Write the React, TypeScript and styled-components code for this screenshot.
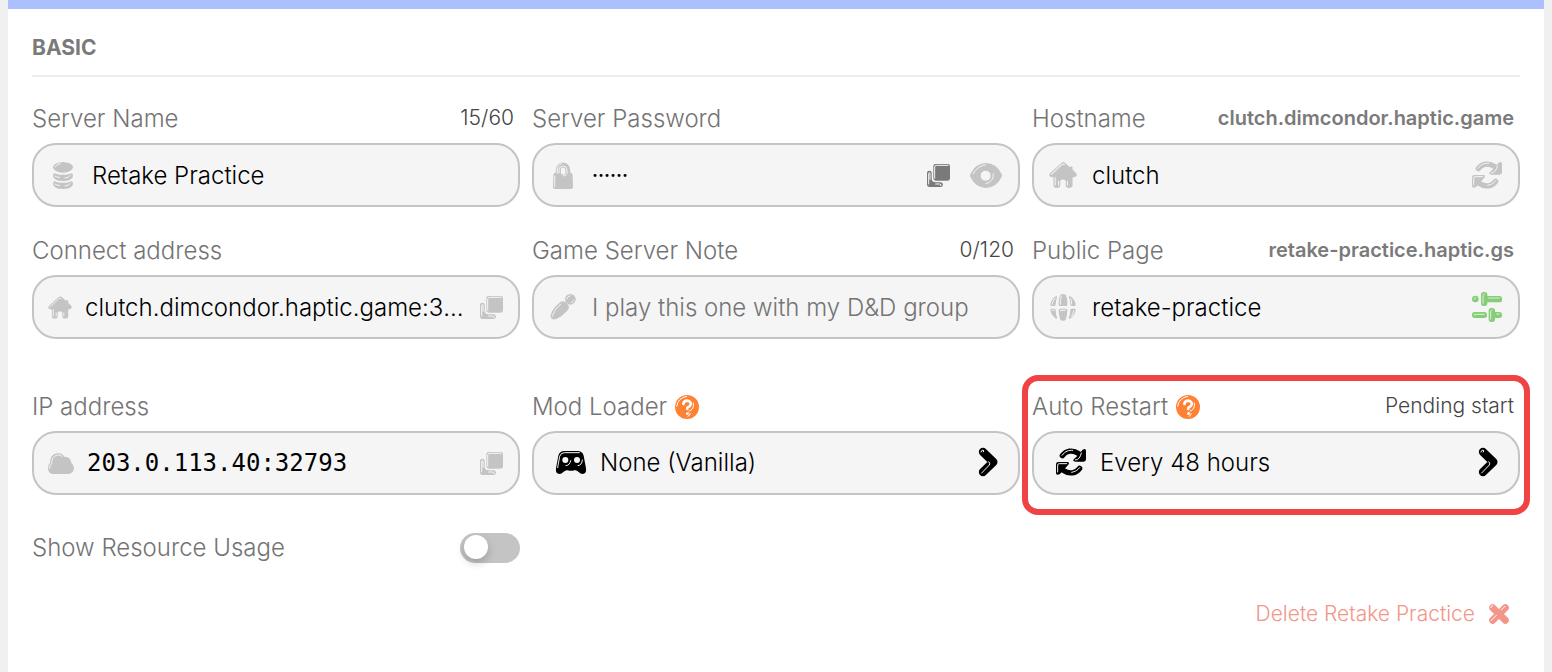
import React from "react";
import styled, { createGlobalStyle } from "styled-components";

const c = {
  page: "#f0f0f0",
  strip: "#abc0fc",
  field: "#f5f5f5",
  border: "#c4c4c4",
  muted: "#c4c4c4",
  label: "#747474",
  strong: "#7a7a7a",
  meta: "#444444",
  orange: "#ff8133",
  green: "#86cd78",
  danger: "#f39588",
  alert: "#f04444",
};

const GlobalStyle = createGlobalStyle`
  *, *::before, *::after { box-sizing: border-box; }
  body {
    margin: 0;
    background: ${c.page};
    font-family: Inter, "Liberation Sans", sans-serif;
    font-weight: 300;
    color: #000;
  }
  button, input { font: inherit; color: inherit; }
`;

/* ---------- icons ---------- */

const Svg = styled.svg<{ $shine?: string }>`
  display: block;
  flex: none;
  overflow: visible;
  fill: currentColor;
  stroke: none;
  stroke-linecap: round;
  stroke-linejoin: round;

  .shine {
    fill: none;
    stroke: ${(p) => p.$shine ?? c.field};
    stroke-width: 3;
  }
  .hole {
    fill: ${(p) => p.$shine ?? c.field};
  }
  .line {
    fill: none;
    stroke: currentColor;
  }
`;

type GlyphProps = { w: number; h: number; shine?: string; children: React.ReactNode };

const Glyph = ({ w, h, shine, children }: GlyphProps) => (
  <Svg width={w} height={h} viewBox={`0 0 ${w * 3} ${h * 3}`} $shine={shine} aria-hidden="true">
    {children}
  </Svg>
);

const DatabaseIcon = () => (
  <Glyph w={20} h={27}>
    <ellipse cx="30" cy="16" rx="30" ry="16" />
    <path d="M0 43Q0 31 9 35Q30 42 51 35Q60 31 60 43Q57 57 30 57Q3 57 0 43Z" />
    <path d="M0 67Q0 55 9 59Q30 66 51 59Q60 55 60 67Q57 81 30 81Q3 81 0 67Z" />
    <path className="shine" d="M6 15Q9 7 22 4M5 42Q12 46 20 47M36 48Q48 47 52 41M5 66Q12 70 20 71M36 72Q48 71 52 65" />
  </Glyph>
);

const LockIcon = () => (
  <Glyph w={20} h={27}>
    <path className="line" strokeWidth="15" d="M16 42V24a14 15 0 0 1 28 0V42" />
    <path d="M6 32H54Q59 33 59 40L60 74Q60 81 52 81H8Q0 81 0 74L1 40Q1 33 6 32Z" />
    <path className="hole" d="M24 34V25Q24 17 31 17Q37 17 37 25V34Q37 38 31 38Q24 38 24 34Z" />
    <path className="shine" d="M5 42V74M13 34V24Q14 9 26 5M18 33V24Q20 12 31 12Q41 12 42 24V34Q40 42 31 42" />
  </Glyph>
);

const HomeIcon = ({ small = false }: { small?: boolean }) => (
  <Svg width={small ? 24 : 28} height={small ? 23 : 26} viewBox="0 0 82 76" aria-hidden="true">
    <path d="M35 4Q42 -3 49 4L61 15Q64 10 69 14V22L80 33Q84 39 77 43L69 45V68Q69 76 58 76Q49 76 49 68V58Q49 51 41 51Q33 51 33 58V68Q33 76 23 76Q13 76 13 68V45L4 43Q-2 39 3 33Z" />
    <path className="shine" d="M7 36L36 9Q40 5 45 8M18 46V67M28 56V67M54 56V67" />
  </Svg>
);

const CopyIcon = () => (
  <Glyph w={23} h={23}>
    <path d="M26 0H62Q69 0 69 7V43Q69 50 62 50H26Q19 50 19 43V7Q19 0 26 0Z" />
    <path d="M0 26Q0 20 7 20Q14 20 14 26V45Q15 55 26 55H41Q48 56 48 62Q48 69 41 69H8Q0 69 0 61Z" />
    <path className="shine" d="M23 43V9Q23 4 29 4H63M5 60V29Q6 24 9 27V46M26 60H38Q44 61 42 65" />
  </Glyph>
);

const EyeIcon = () => (
  <Glyph w={32} h={25}>
    <path d="M1 33Q18 0 48 0Q78 0 95 33Q97 37 95 42Q78 75 48 75Q18 75 1 42Q-1 37 1 33Z" />
    <circle className="hole" cx="47" cy="38" r="15" />
    <path className="shine" d="M9 33Q22 9 46 5M70 32Q72 56 48 62" />
  </Glyph>
);

const RefreshIcon = () => (
  <Glyph w={30} h={28}>
    <path className="line" strokeWidth="16" d="M19 23C30 8 50 4 68 17" />
    <path d="M80 5Q90 0 90 9V34Q90 41 83 41H58Q48 40 54 33L64 24Z" />
    <path className="line" strokeWidth="16" d="M71 61C60 76 40 80 22 67" />
    <path d="M7 42H34Q42 43 37 50L12 78Q0 84 0 75V49Q0 42 7 42Z" />
    <path className="shine" d="M18 22C28 9 38 6 50 7M58 36Q72 36 76 15M5 72V51Q5 47 10 47H32M47 73C58 71 66 66 71 59" />
  </Glyph>
);

const CloudIcon = () => (
  <Glyph w={26} h={21}>
    <path d="M14 63Q0 61 0 46Q0 35 6 30Q6 5 27 1Q42 -2 49 11Q68 10 70 29Q78 36 78 46Q77 61 62 63Z" />
    <path className="shine" d="M5 46Q5 37 11 32Q10 11 28 6Q36 4 42 10" />
  </Glyph>
);

const PencilIcon = () => (
  <Glyph w={26} h={26}>
    <circle cx="61" cy="16" r="16" />
    <path d="M25 29Q37 17 47 25L53 31Q62 39 51 51Q37 67 19 75Q0 80 2 64Q6 46 25 29Z" />
    <path className="shine" d="M7 66Q11 48 32 30M50 15Q52 7 60 5M64 26Q70 24 72 19" />
  </Glyph>
);

const GlobeIcon = () => (
  <Glyph w={26} h={27}>
    <path d="M30 4Q39 -4 48 4Q53 18 52 32Q52 36 48 36H30Q26 36 26 32Q25 18 30 4Z" />
    <path d="M1 31Q5 14 18 7Q23 5 21 11Q17 20 17 31Q17 36 13 36H4Q0 36 1 31Z" />
    <path d="M77 31Q73 14 60 7Q55 5 57 11Q61 20 61 31Q61 36 65 36H74Q78 36 77 31Z" />
    <path d="M30 44H48Q52 44 52 49Q52 64 47 77Q39 84 31 77Q26 64 26 49Q26 44 30 44Z" />
    <path d="M1 49Q5 66 18 74Q23 76 21 70Q17 60 17 49Q17 44 13 44H4Q0 44 1 49Z" />
    <path d="M77 49Q73 66 60 74Q55 76 57 70Q61 60 61 49Q61 44 65 44H74Q78 44 77 49Z" />
    <path className="shine" d="M31 31Q30 16 34 6M6 31Q8 20 15 13M65 30Q65 21 62 14M31 49H46M6 49H12M65 66Q70 59 71 50" />
  </Glyph>
);

const GamepadIcon = () => (
  <Glyph w={30} h={23}>
    <path d="M7 14Q11 0 25 0H65Q79 0 83 14L90 52Q92 69 80 69Q74 69 67 62Q61 56 55 58Q45 61 35 58Q29 56 23 62Q16 69 10 69Q-2 69 0 52Z" />
    <circle className="hole" cx="28" cy="27" r="9" />
    <circle className="hole" cx="63" cy="27" r="9" />
    <path className="shine" d="M5 50L11 16Q14 5 26 5H70M30 44Q42 43 44 29M66 44Q78 43 79 27" />
  </Glyph>
);

const ChevronIcon = () => (
  <Glyph w={19} h={28}>
    <path className="line" strokeWidth="25" d="M12 12L43 42L12 72" />
    <path className="shine" d="M6 12Q7 6 12 6Q17 8 13 12M8 75L31 51Q35 45 29 41" />
  </Glyph>
);

const QuestionIcon = () => (
  <Glyph w={24} h={24} shine="#ffffff">
    <circle cx="36" cy="36" r="36" />
    <path className="shine" d="M5 34Q8 9 35 4M55 24Q59 42 42 49M39 64Q45 62 46 56" />
    <g stroke="#ffffff" strokeWidth="8" fill="none">
      <path d="M25 27Q26 17 37 17Q49 19 47 29Q45 35 37 38V42" />
      <path d="M37 56L38 55" />
    </g>
  </Glyph>
);

const SlidersIcon = () => (
  <Glyph w={30} h={30} shine="#dcefd8">
    <circle cx="10" cy="21" r="10" />
    <rect x="27" y="0" width="19" height="42" rx="8" />
    <rect x="40" y="12" width="50" height="19" rx="8" />
    <rect x="0" y="60" width="45" height="18" rx="8" />
    <rect x="50" y="48" width="19" height="42" rx="8" />
    <rect x="60" y="60" width="30" height="18" rx="8" />
    <path className="shine" d="M6 21Q7 17 11 17M33 34V10Q33 6 37 6M50 18H82M8 70V67H37M56 82V58Q56 54 60 54M74 66H82" />
  </Glyph>
);

const CrossIcon = () => (
  <Glyph w={20} h={20} shine="#ffffff">
    <path className="line" strokeWidth="21" d="M11 11L49 49M49 11L11 49" />
    <path className="shine" d="M5 11Q6 5 11 5M6 50L22 34M37 18L48 7" />
  </Glyph>
);

/* ---------- layout ---------- */

const Panel = styled.main`
  min-height: 100vh;
  margin: 0 8px;
  padding: 24px 24px 43px;
  background: #fff;
  border-top: 9px solid ${c.strip};
`;

const SectionTitle = styled.h2`
  margin: 0 0 26px;
  padding-bottom: 12px;
  border-bottom: 2px solid #ededed;
  font-size: 21px;
  line-height: 30px;
  font-weight: 700;
  color: ${c.strong};
`;

const Grid = styled.div`
  display: grid;
  grid-template-columns: repeat(3, minmax(0, 1fr));
  gap: 28px 12px;

  & + & {
    margin-top: 52px;
  }
`;

const Field = styled.div`
  position: relative;
  display: flex;
  flex-direction: column;
  gap: 8px;
`;

const Highlight = styled.div`
  position: absolute;
  inset: -16px -10px -20px;
  border: 6px solid ${c.alert};
  border-radius: 16px;
  pointer-events: none;
`;

const LabelRow = styled.div`
  display: flex;
  align-items: center;
  gap: 8px;
  height: 32px;
`;

const Label = styled.label`
  font-size: 24px;
  line-height: 32px;
  color: ${c.label};
  white-space: nowrap;
`;

const Meta = styled.span<{ $strong?: boolean }>`
  margin-left: auto;
  padding: 0 6px 2px 0;
  font-size: ${(p) => (p.$strong ? 20 : 21)}px;
  line-height: 28px;
  font-weight: ${(p) => (p.$strong ? 600 : 300)};
  color: ${(p) => (p.$strong ? c.strong : c.meta)};
  white-space: nowrap;
`;

const HelpButton = styled.button`
  display: flex;
  padding: 0;
  border: 0;
  background: none;
  color: ${c.orange};
  cursor: pointer;
`;

const Control = styled.div<{ $copy?: boolean }>`
  display: flex;
  align-items: center;
  gap: ${(p) => (p.$copy ? 13 : 15)}px;
  height: 64px;
  padding: 0 ${(p) => (p.$copy ? 15 : 16)}px 0 ${(p) => (p.$copy ? 14 : 15)}px;
  border: 2px solid ${c.border};
  border-radius: 24px;
  background: ${c.field};
`;

const Lead = styled.span<{ $fixed?: boolean }>`
  display: flex;
  justify-content: center;
  flex: none;
  width: ${(p) => (p.$fixed ? "28px" : "auto")};
  color: ${c.muted};
`;

const Input = styled.input<{ $mono?: boolean }>`
  flex: 1;
  min-width: 0;
  height: 40px;
  padding: 0;
  border: 0;
  outline: 0;
  background: none;
  font-family: ${(p) => (p.$mono ? '"DejaVu Sans Mono", monospace' : "inherit")};
  font-size: 24px;
  text-overflow: ellipsis;

  &::placeholder {
    color: ${c.label};
    opacity: 1;
  }
  &[type="password"] {
    font-family: "DejaVu Sans Mono", monospace;
    font-size: 10px;
  }
`;

const Actions = styled.div`
  display: flex;
  align-items: center;
  gap: 20px;
`;

const IconButton = styled.button<{ $tone?: string }>`
  display: flex;
  padding: 0;
  border: 0;
  background: none;
  color: ${(p) => p.$tone ?? c.muted};
  cursor: pointer;
`;

const PickerButton = styled.button`
  display: flex;
  align-items: center;
  gap: 14px;
  width: 100%;
  height: 64px;
  padding: 0 20px 2px 22px;
  border: 2px solid ${c.border};
  border-radius: 24px;
  background: ${c.field};
  font-size: 24px;
  text-align: left;
  cursor: pointer;
`;

const PickerText = styled.span`
  flex: 1;
`;

const ToggleRow = styled.div`
  display: flex;
  align-items: center;
  justify-content: space-between;
  height: 50px;
`;

const Toggle = styled.input`
  appearance: none;
  display: flex;
  align-items: flex-start;
  width: 60px;
  height: 30px;
  margin: 0;
  padding: 2px 4px;
  border-radius: 15px;
  background: ${c.muted};
  cursor: pointer;

  &::before {
    content: "";
    width: 24px;
    height: 24px;
    border-radius: 50%;
    background: #fff;
    box-shadow: 0 4px 8px rgba(0, 0, 0, 0.2);
  }
  &:checked {
    justify-content: flex-end;
    background: ${c.green};
  }
`;

const Footer = styled.footer`
  display: flex;
  justify-content: flex-end;
  padding: 26px 11px 0 0;
`;

const DeleteButton = styled.button`
  display: flex;
  align-items: center;
  gap: 14px;
  padding: 0;
  border: 0;
  background: none;
  font-size: 21px;
  line-height: 30px;
  color: ${c.danger};
  cursor: pointer;
`;

export default function App() {
  return (
    <>
      <GlobalStyle />
      <Panel>
        <SectionTitle>BASIC</SectionTitle>

        <Grid>
          <Field>
            <LabelRow>
              <Label htmlFor="name">Server Name</Label>
              <Meta>15/60</Meta>
            </LabelRow>
            <Control>
              <Lead $fixed><DatabaseIcon /></Lead>
              <Input id="name" maxLength={60} defaultValue="Retake Practice" />
            </Control>
          </Field>

          <Field>
            <LabelRow>
              <Label htmlFor="password">Server Password</Label>
            </LabelRow>
            <Control>
              <Lead $fixed><LockIcon /></Lead>
              <Input id="password" type="password" defaultValue="clutch" />
              <Actions>
                <IconButton type="button" $tone={c.strong} aria-label="Copy password"><CopyIcon /></IconButton>
                <IconButton type="button" aria-label="Show password"><EyeIcon /></IconButton>
              </Actions>
            </Control>
          </Field>

          <Field>
            <LabelRow>
              <Label htmlFor="hostname">Hostname</Label>
              <Meta $strong>clutch.dimcondor.haptic.game</Meta>
            </LabelRow>
            <Control>
              <Lead $fixed><HomeIcon /></Lead>
              <Input id="hostname" defaultValue="clutch" />
              <IconButton type="button" aria-label="Regenerate hostname"><RefreshIcon /></IconButton>
            </Control>
          </Field>

          <Field>
            <LabelRow>
              <Label htmlFor="address">Connect address</Label>
            </LabelRow>
            <Control $copy>
              <Lead><HomeIcon small /></Lead>
              <Input id="address" readOnly defaultValue="clutch.dimcondor.haptic.game:32793" />
              <IconButton type="button" aria-label="Copy connect address"><CopyIcon /></IconButton>
            </Control>
          </Field>

          <Field>
            <LabelRow>
              <Label htmlFor="note">Game Server Note</Label>
              <Meta>0/120</Meta>
            </LabelRow>
            <Control>
              <Lead $fixed><PencilIcon /></Lead>
              <Input id="note" maxLength={120} placeholder="I play this one with my D&D group" />
            </Control>
          </Field>

          <Field>
            <LabelRow>
              <Label htmlFor="page">Public Page</Label>
              <Meta $strong>retake-practice.haptic.gs</Meta>
            </LabelRow>
            <Control>
              <Lead $fixed><GlobeIcon /></Lead>
              <Input id="page" defaultValue="retake-practice" />
              <IconButton type="button" $tone={c.green} aria-label="Page settings"><SlidersIcon /></IconButton>
            </Control>
          </Field>
        </Grid>

        <Grid>
          <Field>
            <LabelRow>
              <Label htmlFor="ip">IP address</Label>
            </LabelRow>
            <Control $copy>
              <Lead><CloudIcon /></Lead>
              <Input id="ip" $mono readOnly defaultValue="203.0.113.40:32793" />
              <IconButton type="button" aria-label="Copy IP address"><CopyIcon /></IconButton>
            </Control>
          </Field>

          <Field>
            <LabelRow>
              <Label htmlFor="loader">Mod Loader</Label>
              <HelpButton type="button" aria-label="About mod loaders"><QuestionIcon /></HelpButton>
            </LabelRow>
            <PickerButton id="loader" type="button">
              <GamepadIcon />
              <PickerText>None (Vanilla)</PickerText>
              <ChevronIcon />
            </PickerButton>
          </Field>

          <Field>
            <LabelRow>
              <Label htmlFor="restart">Auto Restart</Label>
              <HelpButton type="button" aria-label="About auto restart"><QuestionIcon /></HelpButton>
              <Meta>Pending start</Meta>
            </LabelRow>
            <PickerButton id="restart" type="button">
              <RefreshIcon />
              <PickerText>Every 48 hours</PickerText>
              <ChevronIcon />
            </PickerButton>
            <Highlight />
          </Field>

          <ToggleRow>
            <Label htmlFor="usage">Show Resource Usage</Label>
            <Toggle id="usage" type="checkbox" />
          </ToggleRow>
        </Grid>

        <Footer>
          <DeleteButton type="button">
            Delete Retake Practice
            <CrossIcon />
          </DeleteButton>
        </Footer>
      </Panel>
    </>
  );
}
